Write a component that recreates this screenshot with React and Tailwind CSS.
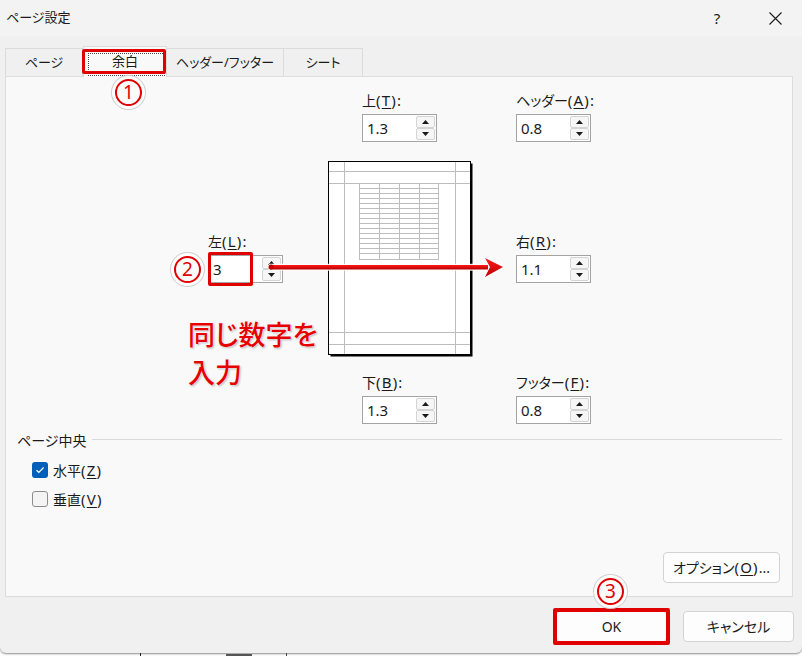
import React from "react";

function Arrows() {
  return (
    <div className="flex flex-col w-[19px] h-[24px] mr-[1px]">
      <div className="h-[12px] border border-[#d4d4d4] bg-[#f6f6f6] rounded-[2px] flex items-center justify-center">
        <svg width="7" height="4" viewBox="0 0 7 4"><polygon points="3.5,0 7,4 0,4" fill="#1a1a1a" /></svg>
      </div>
      <div className="h-[12px] border border-[#d4d4d4] bg-[#f6f6f6] rounded-[2px] flex items-center justify-center">
        <svg width="7" height="4" viewBox="0 0 7 4"><polygon points="0,0 7,0 3.5,4" fill="#1a1a1a" /></svg>
      </div>
    </div>
  );
}

function Key({ k, tail }) {
  return (
    <span className="text-[15px] tracking-[1.2px]">
      (<span className="underline underline-offset-[2px]">{k}</span>){tail}
    </span>
  );
}

function Spin({ label, k, value }) {
  return (
    <div className="flex flex-col w-[75px]">
      <div className="h-[18px] leading-[18px] text-[14px] whitespace-nowrap">
        {label}
        <Key k={k} tail=":" />
      </div>
      <div className="mt-[5px] h-[28px] w-[75px] border border-[#a3a3a3] bg-white flex items-center">
        <span className="flex-1 pl-[4px] text-[15px] leading-[20px]">{value}</span>
        <Arrows />
      </div>
    </div>
  );
}

function Preview() {
  const rows = [];
  for (let i = 0; i < 15; i++) rows.push(22.5 + i * 5);
  rows.push(98.5);
  return (
    <svg width="145" height="196" viewBox="0 0 145 196" className="block">
      <rect x="2.5" y="2.5" width="142" height="193" fill="#000" />
      <rect x="0.5" y="0.5" width="142" height="193" fill="#fff" stroke="#000" strokeWidth="1" />
      <g stroke="#bdbdbd" strokeWidth="1">
        <line x1="16.5" y1="1" x2="16.5" y2="193" />
        <line x1="127.5" y1="1" x2="127.5" y2="193" />
        <line x1="1" y1="10.5" x2="142" y2="10.5" />
        <line x1="1" y1="22.5" x2="142" y2="22.5" />
        <line x1="1" y1="171.5" x2="142" y2="171.5" />
        <line x1="1" y1="183.5" x2="142" y2="183.5" />
        {rows.map((y, i) => (
          <line key={i} x1="31" y1={y} x2="111" y2={y} />
        ))}
        {[31.5, 51.5, 71.5, 91.5, 110.5].map((x, i) => (
          <line key={"c" + i} x1={x} y1="22.5" x2={x} y2="98.5" />
        ))}
      </g>
    </svg>
  );
}

function Circled({ n, className }) {
  return (
    <div
      className={
        "absolute z-20 w-[27px] h-[27px] rounded-full border-[2px] border-[#e00000] bg-[#fbfbfb] flex items-center justify-center text-[#e00000] text-[19px] leading-none shadow-[0_0_0_3px_#ffffff,0_0_0_4px_#cfcfcf] " +
        className
      }
    >
      <span className="font-['Noto_Sans',sans-serif] mt-[-1px]">{n}</span>
    </div>
  );
}

export default function App() {
  return (
    <div className="relative w-[802px] h-[656px] overflow-hidden bg-white text-[#1b1b1b] font-['Noto_Sans','Noto_Sans_CJK_JP',sans-serif] [font-feature-settings:'palt']">
      <div className="w-[802px] h-[653px] bg-[#f0f0f0] rounded-b-[6px] shadow-[0_1px_2px_rgba(0,0,0,0.45)] flex flex-col">
        {/* title bar */}
        <div className="h-[36px] bg-[#f3f3f3] flex items-center justify-between pl-[6px] pr-[4px]">
          <span className="text-[13px]">ページ設定</span>
          <div className="flex gap-[12px] items-center">
            <div className="w-[46px] h-[30px] flex items-center justify-center text-[15px]">?</div>
            <div className="w-[46px] h-[30px] flex items-center justify-center">
              <svg width="13" height="13" viewBox="0 0 13 13">
                <path d="M0.5 0.5 L12.5 12.5 M12.5 0.5 L0.5 12.5" stroke="#1b1b1b" strokeWidth="1.1" />
              </svg>
            </div>
          </div>
        </div>

        {/* tabs */}
        <div className="mt-[10px] pl-[5px] flex items-end h-[30px] text-[13px]">
          <div className="w-[78px] h-[28px] border border-b-0 border-[#dcdcdc] bg-[#f0f0f0] flex items-center justify-center">ページ</div>
          <div className="relative z-10 w-[84px] h-[31px] mb-[-1px] border border-b-0 border-[#dcdcdc] bg-[#f9f9f9] flex items-center justify-center">
            <div className="absolute left-[4px] right-[1px] top-[6px] bottom-[1px] border border-dotted border-[#444]" />
            <span className="mt-[-1px]">余白</span>
          </div>
          <div className="w-[117px] h-[28px] border border-b-0 border-l-0 border-[#dcdcdc] bg-[#f0f0f0] flex items-center justify-center">ヘッダー/フッター</div>
          <div className="w-[79px] h-[28px] border border-b-0 border-l-0 border-[#dcdcdc] bg-[#f0f0f0] flex items-center justify-center">シート</div>
        </div>

        {/* panel */}
        <div className="w-[788px] h-[521px] ml-[5px] border border-[#dcdcdc] bg-[#f9f9f9] flex flex-col">
          <div className="flex pl-[356px] pt-[14px] gap-[79px]">
            <Spin label="上" k="T" value="1.3" />
            <Spin label="ヘッダー" k="A" value="0.8" />
          </div>
          <div className="flex items-start pl-[202px] mt-[19px]">
            <div className="mt-[71px]">
              <Spin label="左" k="L" value="3" />
            </div>
            <div className="ml-[45px]">
              <Preview />
            </div>
            <div className="ml-[43px] mt-[71px]">
              <Spin label="右" k="R" value="1.1" />
            </div>
          </div>
          <div className="flex pl-[356px] mt-[16px] gap-[79px]">
            <Spin label="下" k="B" value="1.3" />
            <Spin label="フッター" k="F" value="0.8" />
          </div>
          <div className="flex items-center mt-[8px] pl-[11px] pr-[10px] h-[18px]">
            <span className="text-[14px] leading-[18px]">ページ中央</span>
            <div className="flex-1 h-px bg-[#dadada] ml-[6px] mb-[3px]" />
          </div>
          <div className="flex items-center mt-[11px] pl-[26px] h-[18px] gap-[5px]">
            <div className="w-[16px] h-[16px] rounded-[3px] bg-[#005fb8] flex items-center justify-center">
              <svg width="10" height="8" viewBox="0 0 10 8">
                <path d="M1.5 4.2 L3.8 6.3 L8.6 1.5" fill="none" stroke="#fff" strokeWidth="1.2" />
              </svg>
            </div>
            <span className="text-[14px] leading-[18px]">
              水平<Key k="Z" tail="" />
            </span>
          </div>
          <div className="flex items-center mt-[11px] pl-[26px] h-[18px] gap-[5px]">
            <div className="w-[16px] h-[16px] rounded-[3px] border border-[#8c8c8c] bg-[#f4f4f4]" />
            <span className="text-[14px] leading-[18px]">
              垂直<Key k="V" tail="" />
            </span>
          </div>
          <div className="mt-auto self-end mr-[12px] mb-[13px] w-[117px] h-[31px] rounded-[4px] border border-[#d3d3d3] bg-[#fdfdfd] flex items-center justify-center text-[14px]">
            オプション<Key k="O" tail="" />
            <span className="text-[14px]">...</span>
          </div>
        </div>

        {/* footer */}
        <div className="flex justify-end gap-[16px] pr-[8px] pt-[14px]">
          <div className="w-[111px] h-[31px] rounded-[4px] border border-[#d3d3d3] bg-[#fdfdfd] flex items-center justify-center text-[14px]">OK</div>
          <div className="w-[111px] h-[31px] rounded-[4px] border border-[#d3d3d3] bg-[#fdfdfd] flex items-center justify-center text-[14px]">キャンセル</div>
        </div>
      </div>

      {/* sheet beneath */}
      <div className="absolute left-[140px] top-[653px] w-px h-[3px] bg-[#222]" />
      <div className="absolute left-[226px] top-[654px] w-[26px] h-[2px] bg-[#555]" />
      <div className="absolute left-[286px] top-[653px] w-px h-[3px] bg-[#444]" />

      {/* annotations */}
      <div className="absolute z-20 left-[82px] top-[49px] w-[84px] h-[25px] border-[3px] border-[#e00000] rounded-[2px]" />
      <Circled n="1" className="left-[115px] top-[79px]" />

      <div className="absolute z-20 left-[208px] top-[252px] w-[45px] h-[34px] border-[3px] border-[#e00000] rounded-[2px]" />
      <Circled n="2" className="left-[174px] top-[256px]" />

      <svg className="absolute z-20 left-[264px] top-[252px]" width="245" height="30" viewBox="0 0 245 30">
        <defs>
          <linearGradient id="ag" x1="0" y1="0" x2="0" y2="1">
            <stop offset="0" stopColor="#ff1a1a" />
            <stop offset="1" stopColor="#b80000" />
          </linearGradient>
        </defs>
        <g stroke="#ffffff" strokeWidth="2.5" strokeLinejoin="round" opacity="0.9">
          <rect x="6" y="13" width="218" height="4.5" fill="none" />
          <polygon points="239,15 221,6 226,15 221,25" fill="none" />
        </g>
        <rect x="6" y="13" width="218" height="4.5" fill="url(#ag)" />
        <polygon points="239,15 221,6 226,15 221,25" fill="url(#ag)" />
        <circle cx="7" cy="15" r="2.5" fill="#c00000" />
      </svg>

      <div className="absolute z-20 left-[188px] top-[315px] text-[27px] leading-[38px] font-medium text-[#e60000] font-['Noto_Sans_CJK_JP',sans-serif] [text-shadow:0_0_2px_#fff,0_0_2px_#fff,1px_1px_2px_#9a9a9a]">
        <div>同じ数字を</div>
        <div>入力</div>
      </div>

      <div className="absolute z-20 left-[553px] top-[608px] w-[117px] h-[37px] border-[4px] border-[#e00000] rounded-[2px]" />
      <Circled n="3" className="left-[597px] top-[578px]" />
    </div>
  );
}
